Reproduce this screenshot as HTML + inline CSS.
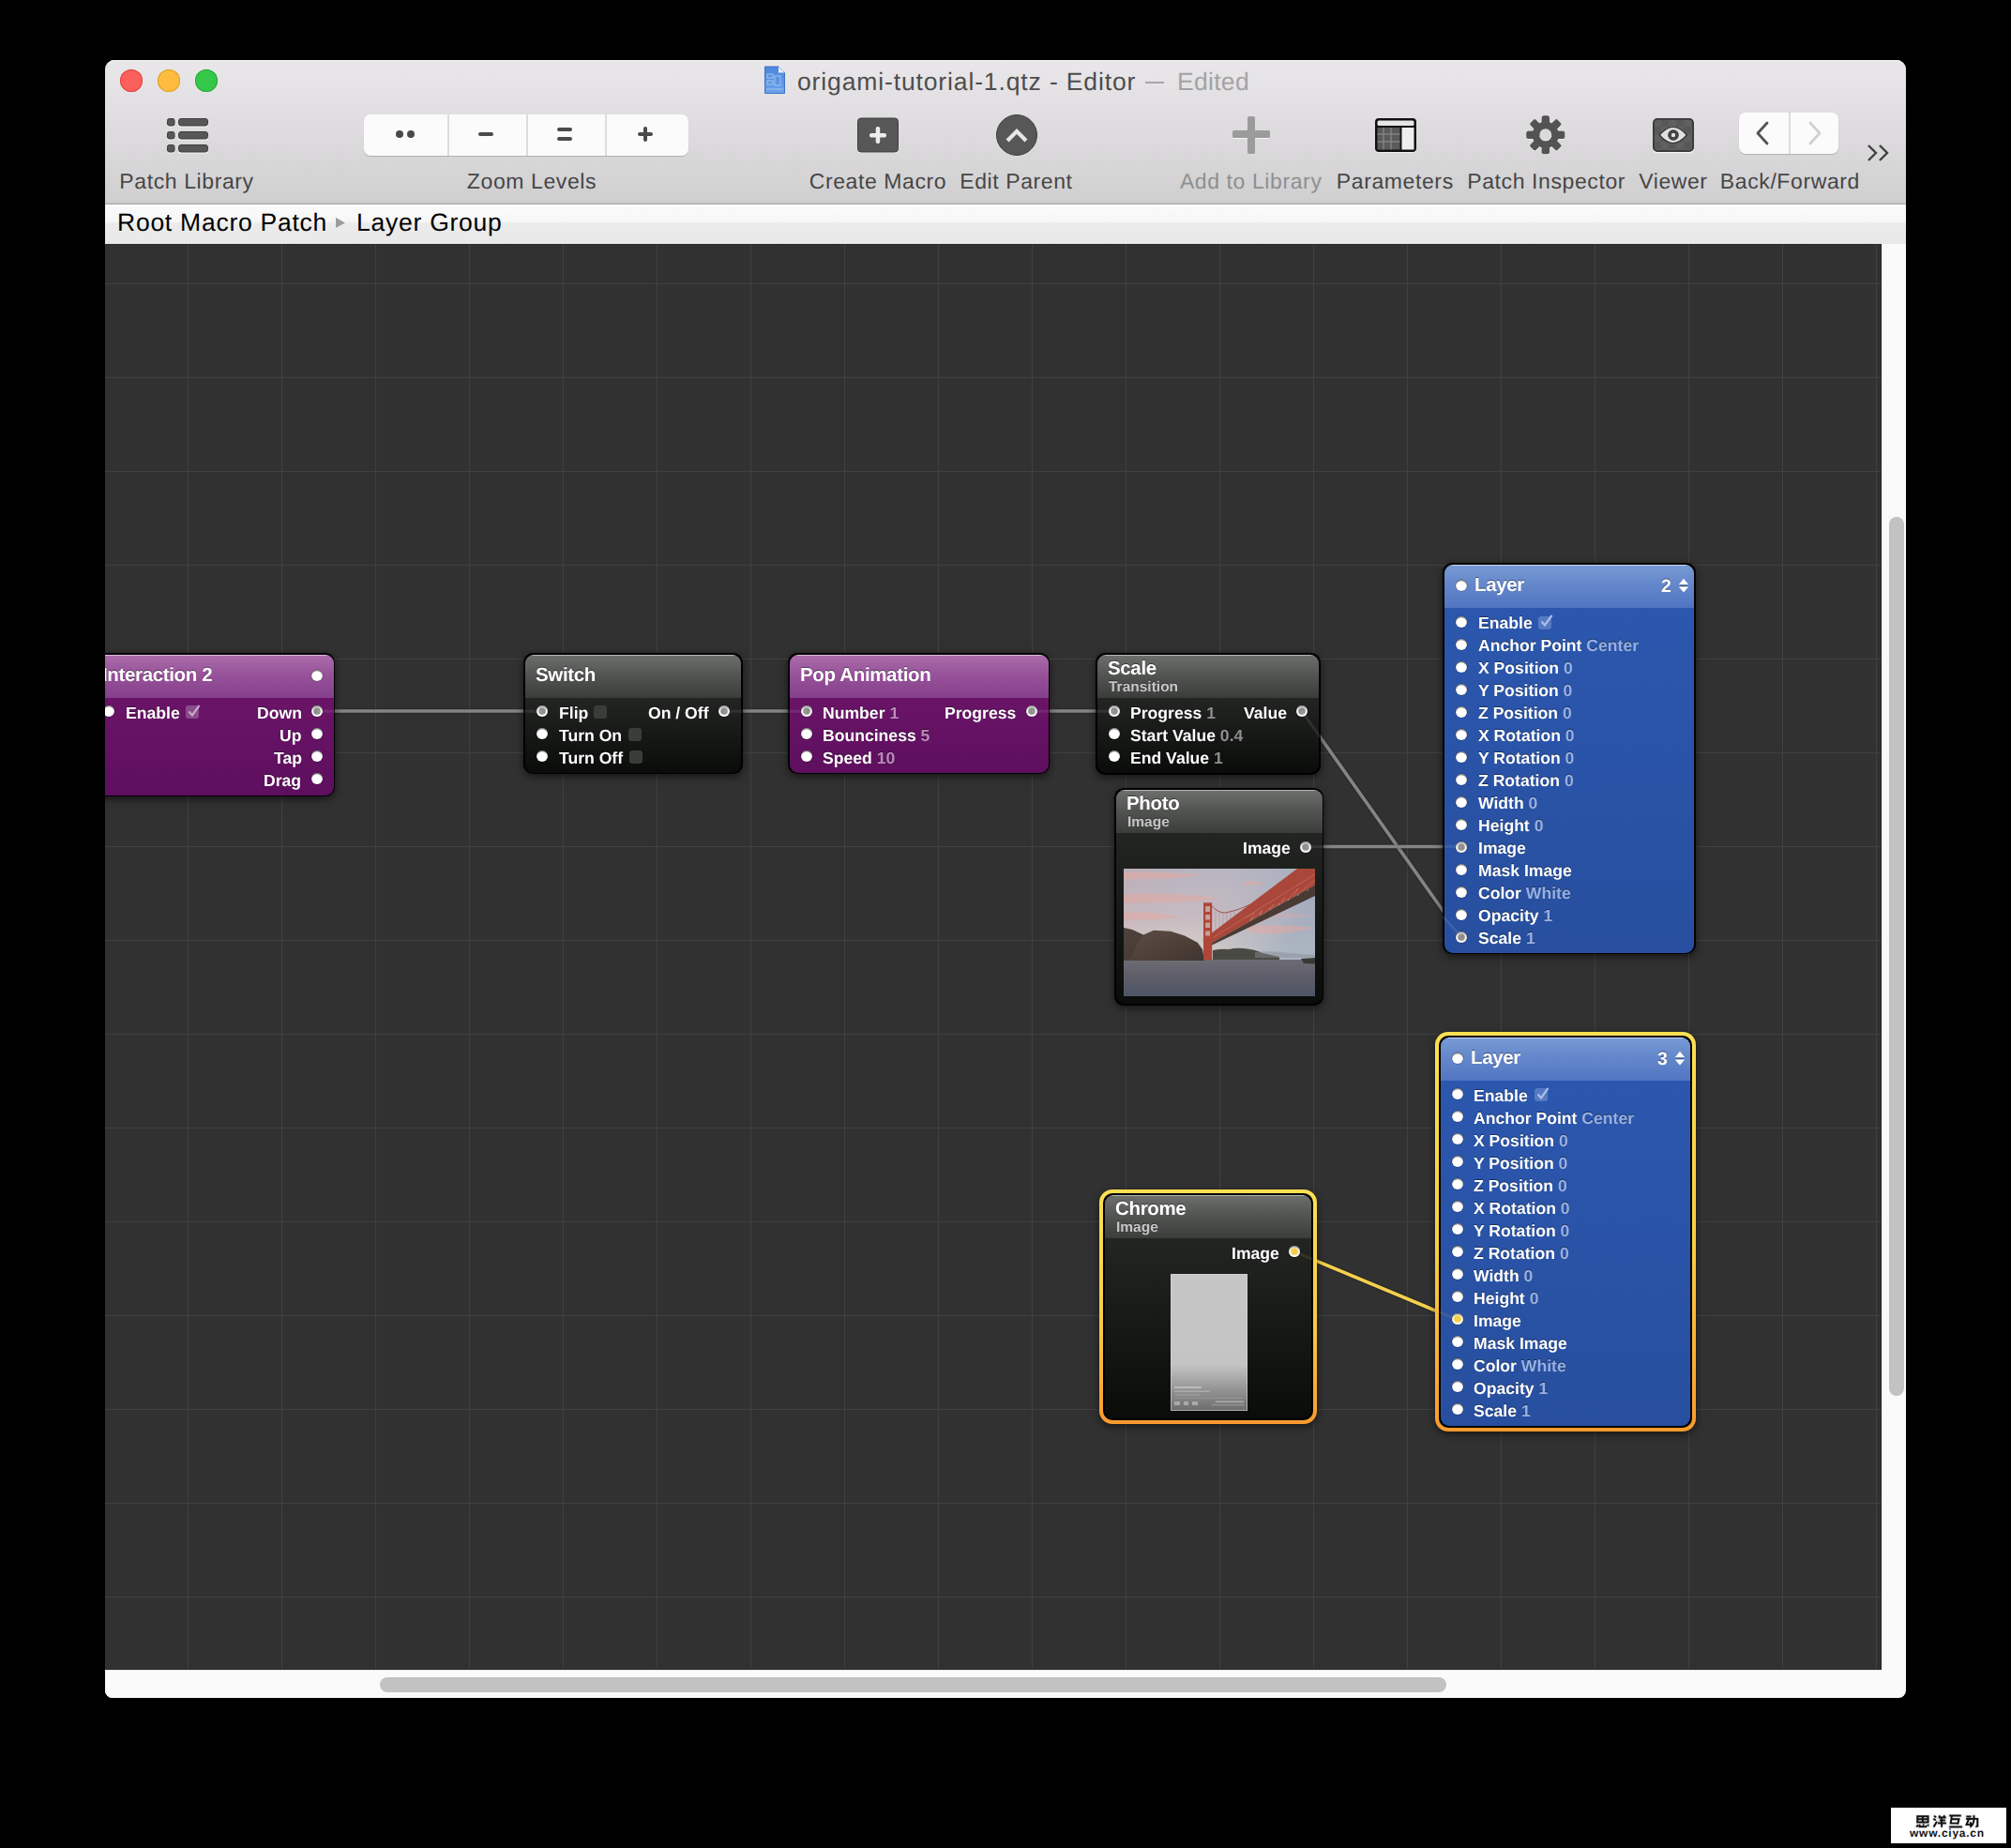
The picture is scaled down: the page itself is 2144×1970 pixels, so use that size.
<!DOCTYPE html><html><head><meta charset="utf-8"><style>
*{box-sizing:border-box}
body{text-rendering:geometricPrecision;margin:0;width:2144px;height:1970px;background:#000;position:relative;overflow:hidden;font-family:'Liberation Sans',sans-serif}
.a{position:absolute}
.t{will-change:transform}
.lbl{position:absolute;font-size:23px;color:#464646;white-space:nowrap;line-height:23px;text-align:center;width:240px;margin-left:-120px;top:182px}
.node{position:absolute;border-radius:10px;background:#000;box-shadow:0 3px 9px rgba(0,0,0,.55)}
.nin{position:absolute;left:1.5px;top:1.5px;right:1.5px;bottom:1.5px;border-radius:9px;overflow:hidden}
.hd{position:absolute;left:0;top:0;right:0}
.bd{position:absolute;left:0;right:0;bottom:0}
.t{position:absolute;white-space:nowrap;color:#fff;font-weight:bold;line-height:20px}
.port{position:absolute;width:12px;height:12px;border-radius:50%;background:#fff;box-shadow:inset 0 1.3px 0 rgba(0,0,0,.5), 0 0 0.5px 0.5px rgba(0,0,0,.35)}
.pc{background:#8e8e8e;box-shadow:inset 0 1.3px 0 rgba(0,0,0,.5), inset 0 0 0 2.2px #f6f6f6, 0 0 0.5px 0.5px rgba(0,0,0,.35)}
.py{background:#f7cf48;box-shadow:inset 0 1.3px 0 rgba(0,0,0,.5), inset 0 0 0 2.2px #f8f8f8, 0 0 0.5px 0.5px rgba(0,0,0,.35)}
.chk{position:absolute;width:14px;height:14px;border-radius:3px}
</style></head><body>
<div class="a" style="left:112px;top:64px;width:1920px;height:1746px;border-radius:10px 10px 8px 8px;overflow:hidden;background:#fafafa">
<div class="a" style="left:0;top:0;width:1920px;height:153px;background:linear-gradient(#e9e7e9,#dcdadc 55%,#d0cfd0);box-shadow:inset 0 1px 0 #f6f6f6"></div>
<div class="a" style="left:0;top:153px;width:1920px;height:1px;background:#a9a9a9"></div>
<div class="a" style="left:0;top:152px;width:1920px;height:1px;background:#c4c3c4"></div>
</div>
<div class="a" style="left:128px;top:74px;width:24px;height:24px;border-radius:50%;background:#fc605c;box-shadow:inset 0 0 0 1px #e0443e"></div>
<div class="a" style="left:168px;top:74px;width:24px;height:24px;border-radius:50%;background:#fdbc40;box-shadow:inset 0 0 0 1px #dea123"></div>
<div class="a" style="left:208px;top:74px;width:24px;height:24px;border-radius:50%;background:#34c84a;box-shadow:inset 0 0 0 1px #27aa35"></div>
<svg class="a" style="left:814px;top:70px" width="24" height="31" viewBox="0 0 24 31">
<defs><linearGradient id="dg" x1="0" y1="0" x2="0" y2="1"><stop offset="0" stop-color="#4d86dc"/><stop offset="1" stop-color="#6aa2ea"/></linearGradient></defs>
<path d="M1.5 1 H16 L22.5 7.5 V29.5 H1.5 Z" fill="url(#dg)" stroke="#3f74c6" stroke-width="1"/>
<path d="M16 1 V7.5 H22.5 Z" fill="#e8f0fb"/>
<g stroke="#a9c8f2" stroke-width="1" fill="none" opacity=".9"><rect x="4" y="9" width="6" height="4"/><rect x="12" y="11" width="6" height="10"/><rect x="4" y="16" width="6" height="4"/><line x1="3" y1="25" x2="21" y2="25"/></g>
</svg>
<div class="a" style="left:850px;top:73px;font-size:26.5px;line-height:28px;color:#4d4d4d;white-space:nowrap;letter-spacing:0.87px">origami-tutorial-1.qtz - Editor</div>
<div class="a" style="left:1221px;top:87px;width:20px;height:2px;background:#a6a6a6"></div>
<div class="a" style="left:1255px;top:73px;font-size:26.5px;line-height:28px;color:#a3a3a3;white-space:nowrap;letter-spacing:0.3px">Edited</div>
<div class="lbl" style="left:199px;color:#464646;letter-spacing:0.6px">Patch Library</div>
<div class="lbl" style="left:567px;color:#464646;letter-spacing:0.6px">Zoom Levels</div>
<div class="lbl" style="left:936px;color:#464646;letter-spacing:0.6px">Create Macro</div>
<div class="lbl" style="left:1083.4px;color:#464646;letter-spacing:0.6px">Edit Parent</div>
<div class="lbl" style="left:1333.7px;color:#8f8f8f;letter-spacing:0.6px">Add to Library</div>
<div class="lbl" style="left:1487.3px;color:#464646;letter-spacing:0.6px">Parameters</div>
<div class="lbl" style="left:1648.7px;color:#464646;letter-spacing:0.6px">Patch Inspector</div>
<div class="lbl" style="left:1783.9px;color:#464646;letter-spacing:0.6px">Viewer</div>
<div class="lbl" style="left:1908.4px;color:#464646;letter-spacing:0.6px">Back/Forward</div>
<svg class="a" style="left:176px;top:124px" width="48" height="42" viewBox="0 0 48 42">
<g fill="#fff" opacity=".8"><rect x="2" y="3.5" width="8" height="8" rx="2"/><rect x="14" y="3.5" width="32" height="8" rx="2.5"/><rect x="2" y="17.5" width="8" height="8" rx="2"/><rect x="14" y="17.5" width="32" height="8" rx="2.5"/><rect x="2" y="31.5" width="8" height="8" rx="2"/><rect x="14" y="31.5" width="32" height="8" rx="2.5"/></g>
<g fill="#575757" stroke="#3c3c3c" stroke-width="1"><rect x="2.5" y="2.5" width="7.5" height="7.5" rx="2"/><rect x="14.5" y="2.5" width="31" height="7.5" rx="2.5"/><rect x="2.5" y="16.5" width="7.5" height="7.5" rx="2"/><rect x="14.5" y="16.5" width="31" height="7.5" rx="2.5"/><rect x="2.5" y="30.5" width="7.5" height="7.5" rx="2"/><rect x="14.5" y="30.5" width="31" height="7.5" rx="2.5"/></g>
</svg>
<div class="a" style="left:388px;top:122px;width:346px;height:44px;border-radius:7px;background:#fbfbfb;box-shadow:0 1px 1px rgba(0,0,0,.18)"></div>
<div class="a" style="left:477px;top:122px;width:1.5px;height:44px;background:#dcdcdc"></div>
<div class="a" style="left:561px;top:122px;width:1.5px;height:44px;background:#dcdcdc"></div>
<div class="a" style="left:645px;top:122px;width:1.5px;height:44px;background:#dcdcdc"></div>
<svg class="a" style="left:388px;top:122px" width="346" height="44" viewBox="0 0 346 44">
<g fill="#4a4a4a"><circle cx="38" cy="21" r="4"/><circle cx="50" cy="21" r="4"/>
<rect x="122" y="19" width="16" height="4" rx="2"/>
<rect x="206" y="14" width="16" height="4" rx="2"/><rect x="206" y="24" width="16" height="4" rx="2"/>
<rect x="292" y="19" width="16" height="4" rx="2"/><rect x="298" y="13" width="4" height="16" rx="2"/></g>
</svg>
<svg class="a" style="left:912px;top:124px" width="48" height="42" viewBox="0 0 48 42">
<rect x="2.5" y="3" width="43" height="36" rx="3.5" fill="#fff" opacity=".7"/>
<rect x="2.5" y="2" width="43" height="36" rx="3.5" fill="#575757" stroke="#3e3e3e" stroke-width="1"/>
<g fill="#ececec"><rect x="15" y="18" width="18" height="4.5" rx="2"/><rect x="21.7" y="11" width="4.5" height="18" rx="2"/></g>
</svg>
<svg class="a" style="left:1060px;top:120px" width="48" height="48" viewBox="0 0 48 48">
<circle cx="24" cy="25" r="21.5" fill="#fff" opacity=".7"/>
<circle cx="24" cy="24" r="21.5" fill="#575757" stroke="#3e3e3e" stroke-width="1"/>
<path d="M15.5 28.5 L24 20 L32.5 28.5" fill="none" stroke="#e6e6e6" stroke-width="4.2" stroke-linecap="square"/>
</svg>
<svg class="a" style="left:1310px;top:120px" width="48" height="48" viewBox="0 0 48 48">
<g fill="#fff" opacity=".7"><rect x="4" y="20" width="40" height="8" rx="1.5"/><rect x="20" y="4" width="8" height="40" rx="1.5"/></g>
<g fill="#9b9b9b"><rect x="4" y="19" width="40" height="8" rx="1.5"/><rect x="20" y="4" width="8" height="40" rx="1.5"/></g>
</svg>
<svg class="a" style="left:1464px;top:124px" width="48" height="42" viewBox="0 0 48 42">
<rect x="2" y="3" width="44" height="36" rx="4" fill="#fff" opacity=".6"/>
<rect x="2" y="2" width="44" height="36" rx="4" fill="#111"/>
<rect x="4.5" y="4.5" width="39" height="5.5" rx="1.5" fill="#e6e6e6"/>
<rect x="4.5" y="12" width="24" height="23.5" fill="#5a5a5a"/>
<g stroke="#8a8a8a" stroke-width="1.2"><line x1="4.5" y1="19" x2="28.5" y2="19"/><line x1="4.5" y1="27" x2="28.5" y2="27"/><line x1="11" y1="12" x2="11" y2="35.5"/><line x1="19" y1="12" x2="19" y2="35.5"/></g>
<rect x="30.5" y="12" width="13" height="23.5" fill="#ededed"/>
</svg>
<svg class="a" style="left:1624px;top:120px" width="48" height="48" viewBox="0 0 48 48">
<g fill="#fff" opacity=".65" transform="translate(0,1.2)"><circle cx="23.8" cy="23.8" r="13.6"/><rect x="20.1" y="3.8" width="7.4" height="12" rx="1.6" transform="rotate(0 23.8 23.8)"/><rect x="20.1" y="3.8" width="7.4" height="12" rx="1.6" transform="rotate(45 23.8 23.8)"/><rect x="20.1" y="3.8" width="7.4" height="12" rx="1.6" transform="rotate(90 23.8 23.8)"/><rect x="20.1" y="3.8" width="7.4" height="12" rx="1.6" transform="rotate(135 23.8 23.8)"/><rect x="20.1" y="3.8" width="7.4" height="12" rx="1.6" transform="rotate(180 23.8 23.8)"/><rect x="20.1" y="3.8" width="7.4" height="12" rx="1.6" transform="rotate(225 23.8 23.8)"/><rect x="20.1" y="3.8" width="7.4" height="12" rx="1.6" transform="rotate(270 23.8 23.8)"/><rect x="20.1" y="3.8" width="7.4" height="12" rx="1.6" transform="rotate(315 23.8 23.8)"/></g>
<g fill="#535353" stroke="#474747" stroke-width=".8"><circle cx="23.8" cy="23.8" r="13.6"/><rect x="20.1" y="3.8" width="7.4" height="12" rx="1.6" transform="rotate(0 23.8 23.8)"/><rect x="20.1" y="3.8" width="7.4" height="12" rx="1.6" transform="rotate(45 23.8 23.8)"/><rect x="20.1" y="3.8" width="7.4" height="12" rx="1.6" transform="rotate(90 23.8 23.8)"/><rect x="20.1" y="3.8" width="7.4" height="12" rx="1.6" transform="rotate(135 23.8 23.8)"/><rect x="20.1" y="3.8" width="7.4" height="12" rx="1.6" transform="rotate(180 23.8 23.8)"/><rect x="20.1" y="3.8" width="7.4" height="12" rx="1.6" transform="rotate(225 23.8 23.8)"/><rect x="20.1" y="3.8" width="7.4" height="12" rx="1.6" transform="rotate(270 23.8 23.8)"/><rect x="20.1" y="3.8" width="7.4" height="12" rx="1.6" transform="rotate(315 23.8 23.8)"/></g>
<g fill="#535353"><circle cx="23.8" cy="23.8" r="13.6"/><rect x="20.1" y="3.8" width="7.4" height="12" rx="1.6" transform="rotate(0 23.8 23.8)"/><rect x="20.1" y="3.8" width="7.4" height="12" rx="1.6" transform="rotate(45 23.8 23.8)"/><rect x="20.1" y="3.8" width="7.4" height="12" rx="1.6" transform="rotate(90 23.8 23.8)"/><rect x="20.1" y="3.8" width="7.4" height="12" rx="1.6" transform="rotate(135 23.8 23.8)"/><rect x="20.1" y="3.8" width="7.4" height="12" rx="1.6" transform="rotate(180 23.8 23.8)"/><rect x="20.1" y="3.8" width="7.4" height="12" rx="1.6" transform="rotate(225 23.8 23.8)"/><rect x="20.1" y="3.8" width="7.4" height="12" rx="1.6" transform="rotate(270 23.8 23.8)"/><rect x="20.1" y="3.8" width="7.4" height="12" rx="1.6" transform="rotate(315 23.8 23.8)"/></g>
<circle cx="23.8" cy="23.8" r="6.5" fill="#dbd9db"/>
<path d="M17.5 25 A6.5 6.5 0 0 0 30.1 25" fill="none" stroke="#fff" stroke-opacity=".5" stroke-width=".8"/>
</svg>
<svg class="a" style="left:1760px;top:124px" width="48" height="42" viewBox="0 0 48 42">
<defs><pattern id="chk" x="3" y="3" width="16" height="16" patternUnits="userSpaceOnUse"><rect width="16" height="16" fill="#585858"/><rect width="8" height="8" fill="#606060"/><rect x="8" y="8" width="8" height="8" fill="#606060"/></pattern></defs>
<rect x="2" y="3.2" width="44" height="36" rx="4.5" fill="#fff" opacity=".7"/>
<rect x="2.9" y="2.9" width="42.2" height="34.2" rx="4" fill="url(#chk)" stroke="#383838" stroke-width="1.8"/>
<path d="M9.3 20 Q23.8 3 38.3 20 Q23.8 37 9.3 20 Z" fill="#e2dfe2" stroke="#333" stroke-width="1.2"/>
<circle cx="24" cy="20" r="5.8" fill="#3b3b3b"/><circle cx="24" cy="20" r="3.9" fill="none" stroke="#4e4e4e" stroke-width="1"/>
<circle cx="24" cy="20" r="2.2" fill="#e6e6e6"/>
</svg>
<div class="a" style="left:1854px;top:120px;width:106px;height:44px;border-radius:7px;background:#fbfbfb;box-shadow:0 1px 1px rgba(0,0,0,.18)"></div>
<div class="a" style="left:1907px;top:120px;width:1.5px;height:44px;background:#dcdcdc"></div>
<svg class="a" style="left:1854px;top:120px" width="106" height="44" viewBox="0 0 106 44">
<path d="M30 11 L20 22 L30 33" fill="none" stroke="#545454" stroke-width="2.8" stroke-linecap="round" stroke-linejoin="round"/>
<path d="M76 11 L86 22 L76 33" fill="none" stroke="#d0d0d0" stroke-width="2.8" stroke-linecap="round" stroke-linejoin="round"/>
</svg>
<svg class="a" style="left:1988px;top:152px" width="30" height="22" viewBox="0 0 30 22">
<path d="M4 3 L12 11 L4 19 M16 3 L24 11 L16 19" fill="none" stroke="#404040" stroke-width="2.4"/>
</svg>
<div class="a" style="left:112px;top:218px;width:1920px;height:42px;background:linear-gradient(#fbfbfb 0%,#f6f6f6 45%,#ebebeb 47%,#e9e9e9 100%)"></div>
<div class="a" style="left:125px;top:223px;font-size:26.5px;line-height:28px;color:#000;white-space:nowrap;letter-spacing:0.75px">Root Macro Patch</div>
<svg class="a" style="left:357px;top:231px" width="12" height="13" viewBox="0 0 12 13"><path d="M1 1 L11 6.5 L1 12 Z" fill="#9c9c9c"/></svg>
<div class="a" style="left:380px;top:223px;font-size:26.5px;line-height:28px;color:#000;white-space:nowrap;letter-spacing:0.75px">Layer Group</div>
<div class="a" style="left:112px;top:260px;width:1894px;height:1520px;background:#313131;overflow:hidden">
<div class="a" style="left:88px;top:0;width:1px;height:1520px;background:#404040"></div><div class="a" style="left:188px;top:0;width:1px;height:1520px;background:#404040"></div><div class="a" style="left:288px;top:0;width:1px;height:1520px;background:#404040"></div><div class="a" style="left:388px;top:0;width:1px;height:1520px;background:#404040"></div><div class="a" style="left:488px;top:0;width:1px;height:1520px;background:#404040"></div><div class="a" style="left:588px;top:0;width:1px;height:1520px;background:#404040"></div><div class="a" style="left:688px;top:0;width:1px;height:1520px;background:#404040"></div><div class="a" style="left:788px;top:0;width:1px;height:1520px;background:#404040"></div><div class="a" style="left:888px;top:0;width:1px;height:1520px;background:#404040"></div><div class="a" style="left:988px;top:0;width:1px;height:1520px;background:#404040"></div><div class="a" style="left:1088px;top:0;width:1px;height:1520px;background:#404040"></div><div class="a" style="left:1188px;top:0;width:1px;height:1520px;background:#404040"></div><div class="a" style="left:1288px;top:0;width:1px;height:1520px;background:#404040"></div><div class="a" style="left:1388px;top:0;width:1px;height:1520px;background:#404040"></div><div class="a" style="left:1488px;top:0;width:1px;height:1520px;background:#404040"></div><div class="a" style="left:1588px;top:0;width:1px;height:1520px;background:#404040"></div><div class="a" style="left:1688px;top:0;width:1px;height:1520px;background:#404040"></div><div class="a" style="left:1788px;top:0;width:1px;height:1520px;background:#404040"></div><div class="a" style="left:1888px;top:0;width:1px;height:1520px;background:#404040"></div><div class="a" style="left:0;top:42px;width:1894px;height:1px;background:#404040"></div><div class="a" style="left:0;top:142px;width:1894px;height:1px;background:#404040"></div><div class="a" style="left:0;top:242px;width:1894px;height:1px;background:#404040"></div><div class="a" style="left:0;top:342px;width:1894px;height:1px;background:#404040"></div><div class="a" style="left:0;top:442px;width:1894px;height:1px;background:#404040"></div><div class="a" style="left:0;top:542px;width:1894px;height:1px;background:#404040"></div><div class="a" style="left:0;top:642px;width:1894px;height:1px;background:#404040"></div><div class="a" style="left:0;top:742px;width:1894px;height:1px;background:#404040"></div><div class="a" style="left:0;top:842px;width:1894px;height:1px;background:#404040"></div><div class="a" style="left:0;top:942px;width:1894px;height:1px;background:#404040"></div><div class="a" style="left:0;top:1042px;width:1894px;height:1px;background:#404040"></div><div class="a" style="left:0;top:1142px;width:1894px;height:1px;background:#404040"></div><div class="a" style="left:0;top:1242px;width:1894px;height:1px;background:#404040"></div><div class="a" style="left:0;top:1342px;width:1894px;height:1px;background:#404040"></div><div class="a" style="left:0;top:1442px;width:1894px;height:1px;background:#404040"></div>
<div class="a" style="left:1893px;top:0;width:1px;height:1520px;background:#2a2a2a"></div>
<div class="a" style="left:0;top:1519px;width:1894px;height:1px;background:#2a2a2a"></div>
<div class="a" id="inner" style="left:-112px;top:-260px;width:2144px;height:1970px">
<svg class="a" style="left:0;top:0" width="2144" height="1970"><line x1="338" y1="758" x2="577.9" y2="758" stroke="#000" stroke-opacity=".12" stroke-width="6.5"/><line x1="338" y1="758" x2="577.9" y2="758" stroke="#848484" stroke-width="3.6"/><line x1="772" y1="758" x2="859.8" y2="758" stroke="#000" stroke-opacity=".12" stroke-width="6.5"/><line x1="772" y1="758" x2="859.8" y2="758" stroke="#848484" stroke-width="3.6"/><line x1="1100" y1="758" x2="1187.8" y2="758" stroke="#000" stroke-opacity=".12" stroke-width="6.5"/><line x1="1100" y1="758" x2="1187.8" y2="758" stroke="#848484" stroke-width="3.6"/><line x1="1388" y1="758.2" x2="1557.8" y2="998.3" stroke="#000" stroke-opacity=".12" stroke-width="6.5"/><line x1="1388" y1="758.2" x2="1557.8" y2="998.3" stroke="#848484" stroke-width="3.6"/><line x1="1392" y1="902.5" x2="1557.8" y2="902.5" stroke="#000" stroke-opacity=".12" stroke-width="6.5"/><line x1="1392" y1="902.5" x2="1557.8" y2="902.5" stroke="#848484" stroke-width="3.6"/><line x1="1380" y1="1334.3" x2="1553.8" y2="1406.9" stroke="#000" stroke-opacity=".12" stroke-width="6.5"/><line x1="1380" y1="1334.3" x2="1553.8" y2="1406.9" stroke="#f5d04c" stroke-width="3.6"/></svg>
<div class="node" style="left:96.2px;top:696.1px;width:261.3px;height:153.2px"><div class="nin"><div class="hd" style="height:46.1px;background:linear-gradient(#aa6caa,#97529a 45%,#84408a);border-top:1.6px solid #dcbcdc"></div><div class="bd" style="top:46.1px;background:linear-gradient(#6a1468,#5e0f5e)"></div></div><div class="t" style="left:13px;top:14.0px;font-size:20.5px;letter-spacing:-0.35px;text-shadow:0 -1px 0.5px rgba(0,0,0,.45);">Interaction 2</div><div class="port" style="left:13.7px;top:56.2px"></div><div class="t" style="left:37.4px;top:53.6px;font-size:17.6px;text-shadow:0 -1px 0.5px rgba(0,0,0,.45);">Enable</div><div class="port pc" style="left:235.6px;top:56.2px"></div><div class="t" style="right:36px;top:53.6px;font-size:17.6px;text-align:right;text-shadow:0 -1px 0.5px rgba(0,0,0,.45);">Down</div><div class="port" style="left:235.6px;top:80.2px"></div><div class="t" style="right:36px;top:77.6px;font-size:17.6px;text-align:right;text-shadow:0 -1px 0.5px rgba(0,0,0,.45);">Up</div><div class="port" style="left:235.6px;top:104.2px"></div><div class="t" style="right:36px;top:101.6px;font-size:17.6px;text-align:right;text-shadow:0 -1px 0.5px rgba(0,0,0,.45);">Tap</div><div class="port" style="left:235.6px;top:128.2px"></div><div class="t" style="right:36px;top:125.6px;font-size:17.6px;text-align:right;text-shadow:0 -1px 0.5px rgba(0,0,0,.45);">Drag</div><div class="port" style="left:235.8px;top:18.3px"></div><div class="chk" style="left:102.0px;top:56.2px;background:#8a4c8a"></div><svg class="a" style="left:103.0px;top:53.7px" width="16" height="16" viewBox="0 0 16 16"><path d="M2.5 8.5 L6 12.5 L13.5 2" fill="none" stroke="#c9a6ca" stroke-width="2.2"/></svg></div>
<div class="node" style="left:558.2px;top:696.2px;width:233.4px;height:129.3px"><div class="nin"><div class="hd" style="height:46.1px;background:linear-gradient(#6c6e6c,#535553 45%,#3b3d3b);border-top:1.6px solid #b4b6b4"></div><div class="bd" style="top:46.1px;background:linear-gradient(#232523,#0a0c0a)"></div></div><div class="t" style="left:13px;top:14.0px;font-size:20.5px;letter-spacing:-0.35px;text-shadow:0 -1px 0.5px rgba(0,0,0,.45);">Switch</div><div class="port pc" style="left:13.7px;top:56.2px"></div><div class="t" style="left:37.4px;top:53.6px;font-size:17.6px;text-shadow:0 -1px 0.5px rgba(0,0,0,.45);">Flip</div><div class="chk" style="left:75.0px;top:56.2px;background:#3a3c3a"></div><div class="port" style="left:13.7px;top:80.2px"></div><div class="t" style="left:37.4px;top:77.6px;font-size:17.6px;text-shadow:0 -1px 0.5px rgba(0,0,0,.45);">Turn On</div><div class="chk" style="left:112.0px;top:80.2px;background:#3a3c3a"></div><div class="port" style="left:13.7px;top:104.2px"></div><div class="t" style="left:37.4px;top:101.6px;font-size:17.6px;text-shadow:0 -1px 0.5px rgba(0,0,0,.45);">Turn Off</div><div class="chk" style="left:112.6px;top:104.2px;background:#3a3c3a"></div><div class="port pc" style="left:207.7px;top:56.2px"></div><div class="t" style="right:36px;top:53.6px;font-size:17.6px;text-align:right;text-shadow:0 -1px 0.5px rgba(0,0,0,.45);">On / Off</div></div>
<div class="node" style="left:840.1px;top:696.2px;width:279.3px;height:129.2px"><div class="nin"><div class="hd" style="height:46.1px;background:linear-gradient(#aa6caa,#97529a 45%,#84408a);border-top:1.6px solid #dcbcdc"></div><div class="bd" style="top:46.1px;background:linear-gradient(#6a1468,#5e0f5e)"></div></div><div class="t" style="left:13px;top:14.0px;font-size:20.5px;letter-spacing:-0.35px;text-shadow:0 -1px 0.5px rgba(0,0,0,.45);">Pop Animation</div><div class="port pc" style="left:13.7px;top:56.2px"></div><div class="t" style="left:37.4px;top:53.6px;font-size:17.6px;text-shadow:0 -1px 0.5px rgba(0,0,0,.45);">Number <span style="color:#b98cba">1</span></div><div class="port" style="left:13.7px;top:80.2px"></div><div class="t" style="left:37.4px;top:77.6px;font-size:17.6px;text-shadow:0 -1px 0.5px rgba(0,0,0,.45);">Bounciness <span style="color:#b98cba">5</span></div><div class="port" style="left:13.7px;top:104.2px"></div><div class="t" style="left:37.4px;top:101.6px;font-size:17.6px;text-shadow:0 -1px 0.5px rgba(0,0,0,.45);">Speed <span style="color:#b98cba">10</span></div><div class="port pc" style="left:253.6px;top:56.2px"></div><div class="t" style="right:36px;top:53.6px;font-size:17.6px;text-align:right;text-shadow:0 -1px 0.5px rgba(0,0,0,.45);">Progress</div></div>
<div class="node" style="left:1168.1px;top:696.2px;width:239.6px;height:129.5px"><div class="nin"><div class="hd" style="height:46.1px;background:linear-gradient(#6c6e6c,#535553 45%,#3b3d3b);border-top:1.6px solid #b4b6b4"></div><div class="bd" style="top:46.1px;background:linear-gradient(#232523,#0a0c0a)"></div></div><div class="t" style="left:13px;top:6.9px;font-size:20.5px;letter-spacing:-0.35px;text-shadow:0 -1px 0.5px rgba(0,0,0,.45);">Scale</div><div class="t" style="left:13.5px;top:27px;font-size:15.5px;color:#c6c6c6;text-shadow:0 -1px 0.5px rgba(0,0,0,.45);">Transition</div><div class="port pc" style="left:13.7px;top:56.2px"></div><div class="t" style="left:37.4px;top:53.6px;font-size:17.6px;text-shadow:0 -1px 0.5px rgba(0,0,0,.45);">Progress <span style="color:#8e8e8e">1</span></div><div class="port" style="left:13.7px;top:80.2px"></div><div class="t" style="left:37.4px;top:77.6px;font-size:17.6px;text-shadow:0 -1px 0.5px rgba(0,0,0,.45);">Start Value <span style="color:#8e8e8e">0.4</span></div><div class="port" style="left:13.7px;top:104.2px"></div><div class="t" style="left:37.4px;top:101.6px;font-size:17.6px;text-shadow:0 -1px 0.5px rgba(0,0,0,.45);">End Value <span style="color:#8e8e8e">1</span></div><div class="port pc" style="left:213.9px;top:56.2px"></div><div class="t" style="right:36px;top:53.6px;font-size:17.6px;text-align:right;text-shadow:0 -1px 0.5px rgba(0,0,0,.45);">Value</div></div>
<div class="node" style="left:1188.3px;top:840.3px;width:223.2px;height:231.7px"><div class="nin"><div class="hd" style="height:46.2px;background:linear-gradient(#6c6e6c,#535553 45%,#3b3d3b);border-top:1.6px solid #b4b6b4"></div><div class="bd" style="top:46.2px;background:linear-gradient(#232523,#0a0c0a)"></div></div><div class="t" style="left:13px;top:6.9px;font-size:20.5px;letter-spacing:-0.35px;text-shadow:0 -1px 0.5px rgba(0,0,0,.45);">Photo</div><div class="t" style="left:13.5px;top:27px;font-size:15.5px;color:#c6c6c6;text-shadow:0 -1px 0.5px rgba(0,0,0,.45);">Image</div><div class="port pc" style="left:197.5px;top:56.3px"></div><div class="t" style="right:36px;top:53.7px;font-size:17.6px;text-align:right;text-shadow:0 -1px 0.5px rgba(0,0,0,.45);">Image</div><svg class="a" style="left:9.700000000000045px;top:85.70000000000005px" width="204" height="136" viewBox="0 0 204 136">
<defs>
<linearGradient id="sky" x1="0" y1="0" x2="0" y2="1"><stop offset="0" stop-color="#b6b4c0"/><stop offset=".4" stop-color="#c9bcc2"/><stop offset=".62" stop-color="#d6cdc8"/><stop offset=".75" stop-color="#cdc4c4"/></linearGradient>
<linearGradient id="skyr" x1="0" y1="0" x2="1" y2=".3"><stop offset="0" stop-color="#d49c9c" stop-opacity=".25"/><stop offset=".5" stop-color="#a8b4c4" stop-opacity="0"/><stop offset="1" stop-color="#8aa2bc" stop-opacity=".55"/></linearGradient>
<linearGradient id="wat" x1="0" y1="0" x2="0" y2="1"><stop offset="0" stop-color="#6e6c74"/><stop offset=".45" stop-color="#5e5e6a"/><stop offset="1" stop-color="#4e5566"/></linearGradient>
<linearGradient id="hill" x1="0" y1="0" x2="1" y2="1"><stop offset="0" stop-color="#5e5048"/><stop offset=".6" stop-color="#4e4038"/><stop offset="1" stop-color="#3e3430"/></linearGradient>
</defs>
<rect width="204" height="136" fill="url(#sky)"/>
<rect width="204" height="100" fill="url(#skyr)"/>
<g fill="#e8a8a0" opacity=".5">
<path d="M0 4 Q40 2 85 7 Q50 12 0 11 Z"/><path d="M0 28 Q50 24 105 32 Q60 38 0 36 Z"/><path d="M0 47 Q30 45 60 52 Q30 56 0 54 Z"/>
<path d="M128 14 Q140 12 150 16 Q140 19 128 17 Z"/><path d="M130 62 Q165 58 204 63 Q170 72 135 68 Z"/><path d="M150 48 Q180 46 204 50 Q180 54 150 52 Z" opacity=".6"/>
</g>
<path d="M95 87 Q105 85 112 86 Q120 84 128 85 Q140 86 148 90 L166 94 L166 98 L95 98 Z" fill="#4a4a44"/>
<path d="M140 89 Q160 87 175 90 L190 91 L204 92 L204 95 L140 95 Z" fill="#8a8c94" opacity=".45"/>
<rect y="97" width="204" height="39" fill="url(#wat)"/>
<path d="M0 63 L9 65 L21 70.5 L32 65.7 L50 66.8 L65 71.4 L78.7 78.7 L84 86 L86 98 L0 98 Z" fill="url(#hill)"/>
<path d="M0 63 L9 65 L21 70.5 L14 80 L8 95 L0 97 Z" fill="#3e3430" opacity=".45"/>
<path d="M94 39.5 Q100 47 108 47 Q140 42 186 4" fill="none" stroke="#9a4a40" stroke-width=".9"/>
<g stroke="#a45a50" stroke-width=".4" opacity=".7"><line x1="98" y1="43" x2="98" y2="77"/><line x1="102" y1="46" x2="102" y2="75"/><line x1="106" y1="47" x2="106" y2="72"/><line x1="110" y1="47" x2="110" y2="70"/><line x1="114" y1="46" x2="114" y2="67"/><line x1="118" y1="45" x2="118" y2="64"/></g>
<path d="M84 76 L185 0 L204 0 L204 17.6 L94 79 Z" fill="#a9473a"/>
<g stroke="#d89080" stroke-width=".7" opacity=".6" fill="none"><path d="M96 73 L204 6"/><path d="M130 52 L140 47 L134 57 L148 44 L144 53 L160 38 L154 48 L172 31 L166 42 L186 21 L180 32 L204 12"/></g>
<path d="M94 79 L204 17.6 L204 29 L94 81.5 Z" fill="#4a3a34"/>
<g fill="#d8d0c8" opacity=".55"><circle cx="196" cy="23" r=".8"/><circle cx="186" cy="28" r=".8"/><circle cx="176" cy="33" r=".8"/><circle cx="166" cy="38" r=".8"/><circle cx="156" cy="43" r=".7"/><circle cx="146" cy="48" r=".7"/><circle cx="136" cy="53" r=".6"/></g>
<rect x="85" y="36.3" width="9.2" height="61" fill="#b04638"/>
<g fill="#c8b4b0" opacity=".85"><rect x="87.2" y="40" width="4.8" height="6"/><rect x="87.2" y="49" width="4.8" height="5.5"/><rect x="87.2" y="57.5" width="4.8" height="5.5"/><rect x="87.2" y="66.5" width="4.8" height="5"/></g>
<path d="M189 96 L204 95 L204 101.5 L192 101 Z" fill="#3a3836"/>
</svg></div>
<div class="node" style="left:1538.2px;top:600.4px;width:269.5px;height:416.9px"><div class="nin"><div class="hd" style="height:46.2px;background:linear-gradient(#7799d4,#6487cb 45%,#5175c2);border-top:1.6px solid #cbd8f0"></div><div class="bd" style="top:46.2px;background:linear-gradient(#2b57ae,#284f9f)"></div></div><div class="t" style="left:33.5px;top:14.0px;font-size:20.5px;letter-spacing:-0.35px;text-shadow:0 -1px 0.5px rgba(0,0,0,.45);">Layer</div><div class="port" style="left:13.7px;top:18.0px"></div><div class="t" style="left:232.5px;top:15px;font-size:19.5px;text-shadow:0 -1px 0.5px rgba(0,0,0,.45);">2</div><svg class="a" style="left:251.0px;top:15.5px" width="12" height="16" viewBox="0 0 12 16"><path d="M1 8 L6 1.2 L11 8 Z" fill="#253a6a" opacity=".55" transform="translate(0,1)"/><path d="M0.8 7.2 L6 0.8 L11.2 7.2 Z M0.8 9.4 L6 15.6 L11.2 9.4 Z" fill="#fff"/></svg><div class="port" style="left:13.7px;top:56.3px"></div><div class="t" style="left:37.4px;top:53.7px;font-size:17.6px;text-shadow:0 -1px 0.5px rgba(0,0,0,.45);">Enable</div><div class="port" style="left:13.7px;top:80.3px"></div><div class="t" style="left:37.4px;top:77.7px;font-size:17.6px;text-shadow:0 -1px 0.5px rgba(0,0,0,.45);">Anchor Point <span style="color:#98b0e2">Center</span></div><div class="port" style="left:13.7px;top:104.3px"></div><div class="t" style="left:37.4px;top:101.7px;font-size:17.6px;text-shadow:0 -1px 0.5px rgba(0,0,0,.45);">X Position <span style="color:#98b0e2">0</span></div><div class="port" style="left:13.7px;top:128.3px"></div><div class="t" style="left:37.4px;top:125.7px;font-size:17.6px;text-shadow:0 -1px 0.5px rgba(0,0,0,.45);">Y Position <span style="color:#98b0e2">0</span></div><div class="port" style="left:13.7px;top:152.3px"></div><div class="t" style="left:37.4px;top:149.7px;font-size:17.6px;text-shadow:0 -1px 0.5px rgba(0,0,0,.45);">Z Position <span style="color:#98b0e2">0</span></div><div class="port" style="left:13.7px;top:176.3px"></div><div class="t" style="left:37.4px;top:173.7px;font-size:17.6px;text-shadow:0 -1px 0.5px rgba(0,0,0,.45);">X Rotation <span style="color:#98b0e2">0</span></div><div class="port" style="left:13.7px;top:200.3px"></div><div class="t" style="left:37.4px;top:197.7px;font-size:17.6px;text-shadow:0 -1px 0.5px rgba(0,0,0,.45);">Y Rotation <span style="color:#98b0e2">0</span></div><div class="port" style="left:13.7px;top:224.3px"></div><div class="t" style="left:37.4px;top:221.7px;font-size:17.6px;text-shadow:0 -1px 0.5px rgba(0,0,0,.45);">Z Rotation <span style="color:#98b0e2">0</span></div><div class="port" style="left:13.7px;top:248.3px"></div><div class="t" style="left:37.4px;top:245.7px;font-size:17.6px;text-shadow:0 -1px 0.5px rgba(0,0,0,.45);">Width <span style="color:#98b0e2">0</span></div><div class="port" style="left:13.7px;top:272.3px"></div><div class="t" style="left:37.4px;top:269.7px;font-size:17.6px;text-shadow:0 -1px 0.5px rgba(0,0,0,.45);">Height <span style="color:#98b0e2">0</span></div><div class="port pc" style="left:13.7px;top:296.3px"></div><div class="t" style="left:37.4px;top:293.7px;font-size:17.6px;text-shadow:0 -1px 0.5px rgba(0,0,0,.45);">Image</div><div class="port" style="left:13.7px;top:320.3px"></div><div class="t" style="left:37.4px;top:317.7px;font-size:17.6px;text-shadow:0 -1px 0.5px rgba(0,0,0,.45);">Mask Image</div><div class="port" style="left:13.7px;top:344.3px"></div><div class="t" style="left:37.4px;top:341.7px;font-size:17.6px;text-shadow:0 -1px 0.5px rgba(0,0,0,.45);">Color <span style="color:#98b0e2">White</span></div><div class="port" style="left:13.7px;top:368.3px"></div><div class="t" style="left:37.4px;top:365.7px;font-size:17.6px;text-shadow:0 -1px 0.5px rgba(0,0,0,.45);">Opacity <span style="color:#98b0e2">1</span></div><div class="port pc" style="left:13.7px;top:392.3px"></div><div class="t" style="left:37.4px;top:389.7px;font-size:17.6px;text-shadow:0 -1px 0.5px rgba(0,0,0,.45);">Scale <span style="color:#98b0e2">1</span></div><div class="chk" style="left:102.3px;top:56.3px;background:#5679c4"></div><svg class="a" style="left:103.3px;top:53.8px" width="16" height="16" viewBox="0 0 16 16"><path d="M2.5 8.5 L6 12.5 L13.5 2" fill="none" stroke="#a9bfe8" stroke-width="2.2"/></svg></div>
<div class="a" style="left:1172px;top:1268px;width:231.5px;height:249.5px;border-radius:14px;background:linear-gradient(#fbe052,#f9cc44 55%,#f99a2e);box-shadow:0 3px 9px rgba(0,0,0,.5)"></div><div class="a" style="left:1176px;top:1272px;width:223.5px;height:241.5px;border-radius:10px;background:#000"><div class="nin"><div class="hd" style="height:46.2px;background:linear-gradient(#6c6e6c,#535553 45%,#3b3d3b);border-top:1.6px solid #b4b6b4"></div><div class="bd" style="top:46.2px;background:linear-gradient(#232523,#0a0c0a)"></div></div><div class="t" style="left:13px;top:6.9px;font-size:20.5px;letter-spacing:-0.35px;text-shadow:0 -1px 0.5px rgba(0,0,0,.45);">Chrome</div><div class="t" style="left:13.5px;top:27px;font-size:15.5px;color:#c6c6c6;text-shadow:0 -1px 0.5px rgba(0,0,0,.45);">Image</div><div class="port py" style="left:197.8px;top:56.3px"></div><div class="t" style="right:36px;top:53.7px;font-size:17.6px;text-align:right;text-shadow:0 -1px 0.5px rgba(0,0,0,.45);">Image</div><svg class="a" style="left:72px;top:86px" width="82" height="146" viewBox="0 0 82 146">
<defs><linearGradient id="chg" x1="0" y1="0" x2="0" y2="1"><stop offset="0" stop-color="#c6c6c6"/><stop offset=".66" stop-color="#c4c4c4"/><stop offset="1" stop-color="#6c6c6c"/></linearGradient></defs>
<rect width="82" height="146" fill="url(#chg)"/>
<rect x=".5" y=".5" width="81" height="145" fill="none" stroke="#d4d4d4" stroke-opacity=".6" stroke-width="1"/>
<g fill="#e6e6e6" opacity=".45"><rect x="4" y="120" width="29" height="2"/><rect x="4" y="124.5" width="38" height="1.5" opacity=".7"/><rect x="4" y="128.5" width="28" height="1.2" opacity=".5"/>
<rect x="4" y="136" width="6" height="4"/><rect x="14" y="136" width="5" height="4"/><rect x="23" y="136" width="6" height="4"/><rect x="48" y="135.5" width="30" height="1.6"/><rect x="44" y="139" width="34" height="1.3" opacity=".6"/></g>
<rect x="4" y="132" width="74" height=".6" fill="#ddd" opacity=".3"/>
</svg></div>
<div class="a" style="left:1530px;top:1100px;width:277.8px;height:425.7px;border-radius:14px;background:linear-gradient(#fbe052,#f9cc44 55%,#f99a2e);box-shadow:0 3px 9px rgba(0,0,0,.5)"></div><div class="a" style="left:1534px;top:1104px;width:269.8px;height:417.7px;border-radius:10px;background:#000"><div class="nin"><div class="hd" style="height:46.2px;background:linear-gradient(#7799d4,#6487cb 45%,#5175c2);border-top:1.6px solid #cbd8f0"></div><div class="bd" style="top:46.2px;background:linear-gradient(#2b57ae,#284f9f)"></div></div><div class="t" style="left:33.5px;top:14.0px;font-size:20.5px;letter-spacing:-0.35px;text-shadow:0 -1px 0.5px rgba(0,0,0,.45);">Layer</div><div class="port" style="left:13.7px;top:18.0px"></div><div class="t" style="left:232.8px;top:15px;font-size:19.5px;text-shadow:0 -1px 0.5px rgba(0,0,0,.45);">3</div><svg class="a" style="left:251.3px;top:15.5px" width="12" height="16" viewBox="0 0 12 16"><path d="M1 8 L6 1.2 L11 8 Z" fill="#253a6a" opacity=".55" transform="translate(0,1)"/><path d="M0.8 7.2 L6 0.8 L11.2 7.2 Z M0.8 9.4 L6 15.6 L11.2 9.4 Z" fill="#fff"/></svg><div class="port" style="left:13.7px;top:56.3px"></div><div class="t" style="left:37.4px;top:53.7px;font-size:17.6px;text-shadow:0 -1px 0.5px rgba(0,0,0,.45);">Enable</div><div class="port" style="left:13.7px;top:80.3px"></div><div class="t" style="left:37.4px;top:77.7px;font-size:17.6px;text-shadow:0 -1px 0.5px rgba(0,0,0,.45);">Anchor Point <span style="color:#98b0e2">Center</span></div><div class="port" style="left:13.7px;top:104.3px"></div><div class="t" style="left:37.4px;top:101.7px;font-size:17.6px;text-shadow:0 -1px 0.5px rgba(0,0,0,.45);">X Position <span style="color:#98b0e2">0</span></div><div class="port" style="left:13.7px;top:128.3px"></div><div class="t" style="left:37.4px;top:125.7px;font-size:17.6px;text-shadow:0 -1px 0.5px rgba(0,0,0,.45);">Y Position <span style="color:#98b0e2">0</span></div><div class="port" style="left:13.7px;top:152.3px"></div><div class="t" style="left:37.4px;top:149.7px;font-size:17.6px;text-shadow:0 -1px 0.5px rgba(0,0,0,.45);">Z Position <span style="color:#98b0e2">0</span></div><div class="port" style="left:13.7px;top:176.3px"></div><div class="t" style="left:37.4px;top:173.7px;font-size:17.6px;text-shadow:0 -1px 0.5px rgba(0,0,0,.45);">X Rotation <span style="color:#98b0e2">0</span></div><div class="port" style="left:13.7px;top:200.3px"></div><div class="t" style="left:37.4px;top:197.7px;font-size:17.6px;text-shadow:0 -1px 0.5px rgba(0,0,0,.45);">Y Rotation <span style="color:#98b0e2">0</span></div><div class="port" style="left:13.7px;top:224.3px"></div><div class="t" style="left:37.4px;top:221.7px;font-size:17.6px;text-shadow:0 -1px 0.5px rgba(0,0,0,.45);">Z Rotation <span style="color:#98b0e2">0</span></div><div class="port" style="left:13.7px;top:248.3px"></div><div class="t" style="left:37.4px;top:245.7px;font-size:17.6px;text-shadow:0 -1px 0.5px rgba(0,0,0,.45);">Width <span style="color:#98b0e2">0</span></div><div class="port" style="left:13.7px;top:272.3px"></div><div class="t" style="left:37.4px;top:269.7px;font-size:17.6px;text-shadow:0 -1px 0.5px rgba(0,0,0,.45);">Height <span style="color:#98b0e2">0</span></div><div class="port py" style="left:13.7px;top:296.3px"></div><div class="t" style="left:37.4px;top:293.7px;font-size:17.6px;text-shadow:0 -1px 0.5px rgba(0,0,0,.45);">Image</div><div class="port" style="left:13.7px;top:320.3px"></div><div class="t" style="left:37.4px;top:317.7px;font-size:17.6px;text-shadow:0 -1px 0.5px rgba(0,0,0,.45);">Mask Image</div><div class="port" style="left:13.7px;top:344.3px"></div><div class="t" style="left:37.4px;top:341.7px;font-size:17.6px;text-shadow:0 -1px 0.5px rgba(0,0,0,.45);">Color <span style="color:#98b0e2">White</span></div><div class="port" style="left:13.7px;top:368.3px"></div><div class="t" style="left:37.4px;top:365.7px;font-size:17.6px;text-shadow:0 -1px 0.5px rgba(0,0,0,.45);">Opacity <span style="color:#98b0e2">1</span></div><div class="port" style="left:13.7px;top:392.3px"></div><div class="t" style="left:37.4px;top:389.7px;font-size:17.6px;text-shadow:0 -1px 0.5px rgba(0,0,0,.45);">Scale <span style="color:#98b0e2">1</span></div><div class="chk" style="left:102.3px;top:56.3px;background:#5679c4"></div><svg class="a" style="left:103.3px;top:53.8px" width="16" height="16" viewBox="0 0 16 16"><path d="M2.5 8.5 L6 12.5 L13.5 2" fill="none" stroke="#a9bfe8" stroke-width="2.2"/></svg></div>
<svg class="a" style="left:0;top:0" width="2144" height="1970"><line x1="338" y1="758.3" x2="357.5" y2="758.3" stroke="#fff" stroke-opacity=".09" stroke-width="3"/><line x1="558.2" y1="758.3" x2="577.9" y2="758.3" stroke="#fff" stroke-opacity=".09" stroke-width="3"/><line x1="772" y1="758.3" x2="791.6" y2="758.3" stroke="#fff" stroke-opacity=".09" stroke-width="3"/><line x1="840.1" y1="758.3" x2="859.8" y2="758.3" stroke="#fff" stroke-opacity=".09" stroke-width="3"/><line x1="1100" y1="758.2" x2="1119.4" y2="758.2" stroke="#fff" stroke-opacity=".09" stroke-width="3"/><line x1="1168.1" y1="758.2" x2="1187.8" y2="758.2" stroke="#fff" stroke-opacity=".09" stroke-width="3"/><line x1="1388" y1="758.2" x2="1407.7" y2="786.0" stroke="#fff" stroke-opacity=".09" stroke-width="3"/><line x1="1538.2" y1="976.9" x2="1557.8" y2="998.3" stroke="#fff" stroke-opacity=".09" stroke-width="3"/><line x1="1392" y1="902.6" x2="1411.5" y2="902.6" stroke="#fff" stroke-opacity=".09" stroke-width="3"/><line x1="1538.2" y1="902.4" x2="1557.8" y2="902.4" stroke="#fff" stroke-opacity=".09" stroke-width="3"/><line x1="1380" y1="1334.3" x2="1399.5" y2="1342.4" stroke="#f3cd4a" stroke-opacity=".1" stroke-width="3"/><line x1="1534" y1="1398.7" x2="1553.8" y2="1406.9" stroke="#f3cd4a" stroke-opacity=".1" stroke-width="3"/></svg>
</div></div>
<div class="a" style="left:2006px;top:260px;width:26px;height:1520px;background:#fafafa;border-left:1px solid #e8e8e8"></div>
<div class="a" style="left:2014px;top:551px;width:16px;height:937px;border-radius:8px;background:#c2c2c2"></div>
<div class="a" style="left:112px;top:1780px;width:1894px;height:30px;background:#fafafa;border-top:1px solid #e8e8e8;border-bottom-left-radius:8px"></div>
<div class="a" style="left:405px;top:1788px;width:1137px;height:16px;border-radius:8px;background:#c2c2c2"></div>
<div class="a" style="left:2016px;top:1927px;width:123px;height:38px;background:#fff"></div>
<svg class="a" style="left:2038px;top:1930px" width="76" height="22" viewBox="0 0 2011 582">
<g fill="none" stroke="#cfcfcf" stroke-width="90" stroke-linejoin="round" stroke-linecap="round" opacity=".55"><path d="M165 165 H465 V330 H165 Z M315 165 V330 M165 247 H465 M140 460 L185 410 M225 390 V455 H420 M320 385 L350 410 M395 430 L430 458 M450 400 L485 432"/><path d="M640 150 L690 195 M620 235 L680 275 M625 465 L715 310 M775 148 L805 178 M935 145 L905 182 M760 200 H970 M790 275 H950 M740 355 H975 M850 200 V470"/><path d="M1065 145 H1395 M1065 462 H1425 M1135 150 L1105 360 H1300 M1130 245 H1335 L1300 390"/><path d="M1545 170 H1680 M1540 240 H1705 M1610 255 L1550 400 H1700 M1650 330 L1700 410 M1700 235 H1860 V440 L1810 460 M1760 140 V250 Q1750 400 1650 465"/></g>
<g fill="none" stroke="#111" stroke-width="52" stroke-linejoin="miter"><path d="M165 165 H465 V330 H165 Z M315 165 V330 M165 247 H465 M140 460 L185 410 M225 390 V455 H420 M320 385 L350 410 M395 430 L430 458 M450 400 L485 432"/><path d="M640 150 L690 195 M620 235 L680 275 M625 465 L715 310 M775 148 L805 178 M935 145 L905 182 M760 200 H970 M790 275 H950 M740 355 H975 M850 200 V470"/><path d="M1065 145 H1395 M1065 462 H1425 M1135 150 L1105 360 H1300 M1130 245 H1335 L1300 390"/><path d="M1545 170 H1680 M1540 240 H1705 M1610 255 L1550 400 H1700 M1650 330 L1700 410 M1700 235 H1860 V440 L1810 460 M1760 140 V250 Q1750 400 1650 465"/></g>
</svg>
<div class="a" style="left:2036px;top:1948px;font-size:12px;line-height:13px;color:#111;font-weight:bold;white-space:nowrap;letter-spacing:0.75px">www.ciya.cn</div>
</body></html>
